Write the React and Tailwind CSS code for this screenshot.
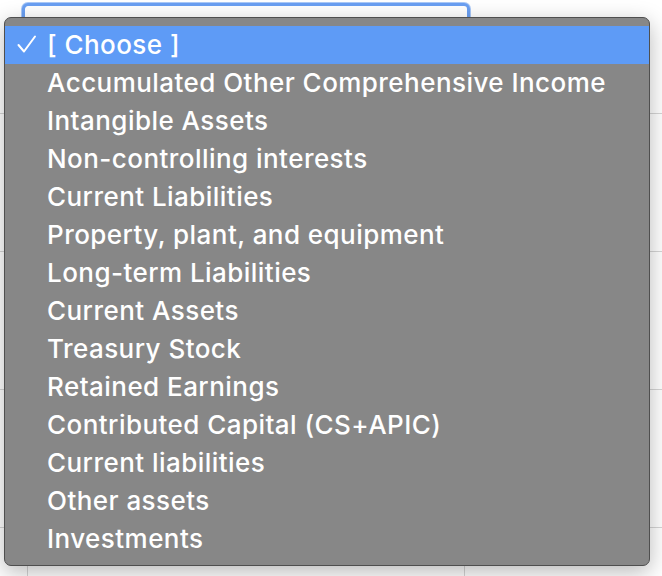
import React from 'react'

const options = [
  '[ Choose ]',
  'Accumulated Other Comprehensive Income',
  'Intangible Assets',
  'Non-controlling interests',
  'Current Liabilities',
  'Property, plant, and equipment',
  'Long-term Liabilities',
  'Current Assets',
  'Treasury Stock',
  'Retained Earnings',
  'Contributed Capital (CS+APIC)',
  'Current liabilities',
  'Other assets',
  'Investments'
]

const Check = () => (
  <svg width="20" height="20" viewBox="0 0 20 20" className="ml-[12px]">
    <polyline points="1.5,10 7,16.5 18,1.5" fill="none" stroke="white" strokeWidth="2" strokeLinecap="round" strokeLinejoin="round" />
  </svg>
)

const App = () => {
  const rows = [0, 1, 2]

  return (
    <div className="relative w-[662px] h-[576px] overflow-hidden bg-white font-['Inter',sans-serif]">
      {/* Background table */}
      <div className="h-[114px] border-b border-[#d6d6d6] pt-[3px] pl-[22px]">
        <div className="w-[448px] h-[40px] rounded-[6px] border-[3px] border-[#6a9ff2] bg-white shadow-[0_0_0_1px_#a9c8f7]"></div>
      </div>
      {rows.map((r) => (
        <div key={r} className="flex h-[138px] border-b border-[#d6d6d6]">
          <div className="w-[27px]"></div>
          <div className="w-[437px] border-l border-[#d6d6d6]"></div>
          <div className="flex-1 border-l border-[#d6d6d6]"></div>
        </div>
      ))}
      <div className="flex h-[60px]">
        <div className="w-[27px]"></div>
        <div className="w-[437px] border-l border-[#d6d6d6]"></div>
        <div className="flex-1 border-l border-[#d6d6d6]"></div>
      </div>

      {/* Open select menu */}
      <div className="absolute left-[4px] top-[17px] w-[646px] h-[549px] rounded-[7px] border border-[#4f4f4f] bg-[#878787] pt-[8px] shadow-[0_6px_22px_rgba(0,0,0,0.28)]">
        {options.map((opt, i) => (
          <div
            key={i}
            className={`flex items-center h-[38px] text-white text-[26px] font-medium tracking-[0.45px] leading-none ${i === 0 ? 'bg-[#5e9bf6]' : ''}`}
          >
            <span className="flex w-[42px] items-center">{i === 0 ? <Check /> : null}</span>
            <span>{opt}</span>
          </div>
        ))}
      </div>
    </div>
  )
}

export default App
